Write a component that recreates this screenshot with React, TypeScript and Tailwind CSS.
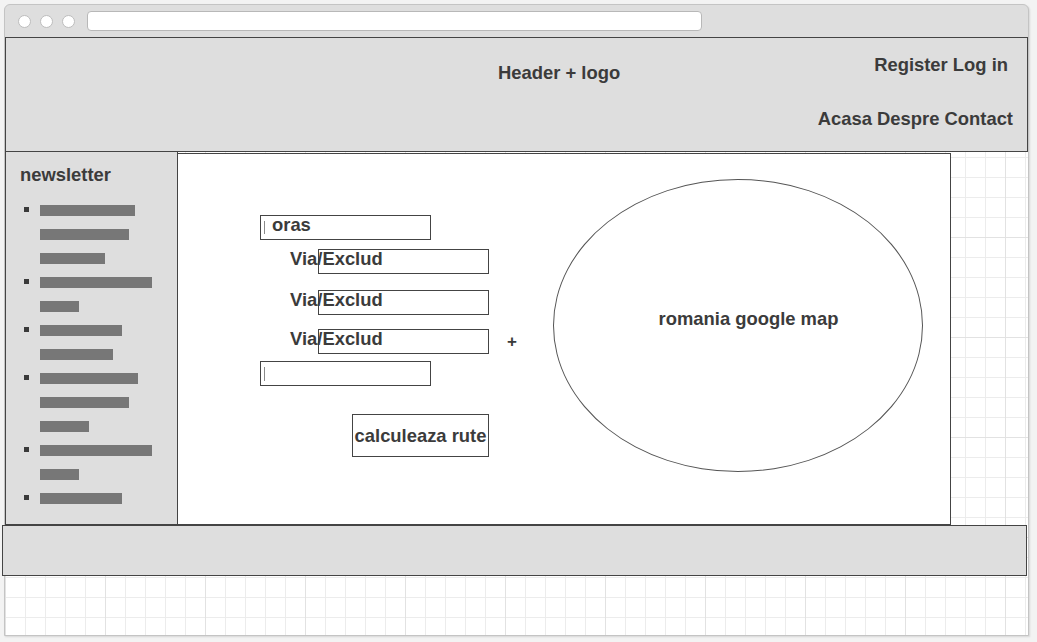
const newsletter: number[][] = [
  [95, 89, 65],
  [112, 39],
  [82, 73],
  [98, 89, 49],
  [112, 39],
  [82],
];

const grid =
  'bg-[linear-gradient(to_right,#e2e2e2_1px,transparent_1px),linear-gradient(to_bottom,#e2e2e2_1px,transparent_1px),linear-gradient(to_right,#ececec_1px,transparent_1px),linear-gradient(to_bottom,#ececec_1px,transparent_1px)] bg-[size:100px_100px,100px_100px,20px_20px,20px_20px]';

function Caret({ h = 'h-[13px]' }: { h?: string }) {
  return <span className={`w-px ${h} bg-[#8a8a8a] ml-[3px]`} />;
}

function ViaRow({ plus, className }: { plus?: boolean; className: string }) {
  return (
    <div className={`relative flex items-center h-[25px] ${className}`}>
      <div className="ml-[58px] w-[171px] h-[25px] border border-[#444] shrink-0" />
      {plus && <span className="ml-[18px] text-[17px] leading-none">+</span>}
      <span className="absolute left-[30px] top-[-2px] leading-[24px]">Via/Exclud</span>
    </div>
  );
}

export default function App() {
  return (
    <div className="w-[1037px] h-[642px] bg-[#f3f3f3] pt-[4px] pl-[4px] overflow-hidden font-['Liberation_Sans',Arial,sans-serif] font-bold text-[18.4px] text-[#3b3b3b]">
      <div className="w-[1025px] h-[632px] border border-[#c4c4c4] rounded-t-[6px] bg-[#dedede] flex flex-col shadow-[1px_1px_2px_rgba(0,0,0,0.12)]">
        {/* barra browser */}
        <div className="h-[32px] flex items-center shrink-0 rounded-t-[6px]">
          <span className="ml-[13px] w-[13px] h-[13px] rounded-full bg-white border border-[#bdbdbd]" />
          <span className="ml-[9px] w-[13px] h-[13px] rounded-full bg-white border border-[#bdbdbd]" />
          <span className="ml-[9px] w-[13px] h-[13px] rounded-full bg-white border border-[#bdbdbd]" />
          <span className="ml-[12px] w-[615px] h-[20px] rounded-[4px] bg-white border border-[#b8b8b8] -mt-[1px]" />
        </div>

        <div className={`flex-1 bg-white ${grid}`}>
          {/* header */}
          <header className="h-[115px] border border-[#444] bg-[#dedede] flex justify-between">
            <div className="ml-[492px] pt-[24px] leading-[21px]">Header + logo</div>
            <div className="flex flex-col items-end leading-[21px]">
              <span className="mt-[16px] mr-[19px]">Register Log in</span>
              <span className="mt-[33px] mr-[14px]">Acasa Despre Contact</span>
            </div>
          </header>

          <div className="flex h-[373px]">
            {/* newsletter */}
            <aside className="w-[173px] border-x border-b border-[#444] bg-[#dedede] shrink-0">
              <div className="pl-[14px] pt-[12px] leading-[21px]">newsletter</div>
              <ul className="mt-[20px] flex flex-col gap-[13px]">
                {newsletter.map((lines, i) => (
                  <li key={i} className="relative flex flex-col gap-[13px] pl-[34px]">
                    <span className="absolute left-[18px] top-[2px] w-[5px] h-[5px] bg-[#3a3a3a]" />
                    {lines.map((w, j) => (
                      <span key={j} className="block h-[11px] bg-[#777]" style={{ width: w }} />
                    ))}
                  </li>
                ))}
              </ul>
            </aside>

            {/* continut */}
            <main className="-ml-px mt-[1px] w-[774px] h-[372px] border border-[#444] bg-white flex items-start pl-[82px]">
              <div className="w-[260px] mt-[61px] flex flex-col items-start">
                <div className="w-[171px] h-[25px] border border-[#444] flex items-center">
                  <Caret />
                  <span className="ml-[7px] leading-none -mt-[5px]">oras</span>
                </div>
                <ViaRow className="mt-[9px]" />
                <ViaRow className="mt-[16px]" />
                <ViaRow className="mt-[14px]" plus />
                <div className="mt-[7px] w-[171px] h-[25px] border border-[#444] flex items-center">
                  <Caret h="h-[14px]" />
                </div>
                <button className="mt-[28px] ml-[92px] w-[137px] h-[43px] border border-[#444] flex items-center justify-center whitespace-nowrap font-bold">
                  calculeaza rute
                </button>
              </div>

              <div className="ml-[33px] mt-[25px] w-[370px] h-[293px] rounded-[50%] border border-[#555] flex items-center justify-center pl-[21px] pb-[14px] shrink-0">
                romania google map
              </div>
            </main>
          </div>

          {/* footer */}
          <footer className="-ml-[3px] w-[1025px] h-[51px] border border-[#444] bg-[#dedede]" />
        </div>
      </div>
    </div>
  );
}
